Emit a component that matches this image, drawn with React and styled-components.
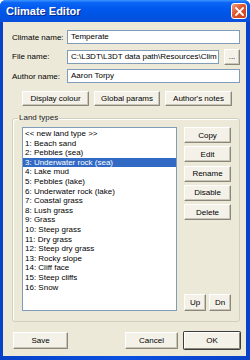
import React from 'react';
import styled, { createGlobalStyle } from 'styled-components';

const GlobalStyle = createGlobalStyle`
  html, body {
    margin: 0;
    padding: 0;
    background: #ffffff;
  }
`;

const font = `"Liberation Sans", Arial, sans-serif`;

const Window = styled.div`
  width: 250px;
  height: 360px;
  box-sizing: border-box;
  display: flex;
  flex-direction: column;
  background: linear-gradient(90deg, #0842c8 0%, #0a4fe0 50%, #0842c8 100%);
  border-radius: 6px 6px 0 0;
  overflow: hidden;
  font-family: ${font};
`;

const TitleBar = styled.div`
  height: 22px;
  flex: none;
  display: flex;
  align-items: center;
  justify-content: space-between;
  padding: 0 3px 0 6px;
  background: linear-gradient(180deg, #3d95ff 0%, #0a66f5 12%, #0058ee 40%, #0054e3 70%, #0a4fdc 100%);
  box-sizing: border-box;
`;

const Title = styled.span`
  color: #ffffff;
  font-weight: bold;
  font-size: 11px;
  text-shadow: 1px 1px 0 #0a2a8a;
`;

const CloseButton = styled.div`
  width: 16px;
  height: 16px;
  box-sizing: border-box;
  border: 1px solid #ffffff;
  border-radius: 3px;
  background: linear-gradient(135deg, #f0a080 0%, #e0552f 45%, #c8401a 100%);
  display: flex;
  align-items: center;
  justify-content: center;
`;

const Client = styled.div`
  flex: 1;
  min-width: 0;
  margin: 0 4px 4px 3px;
  background: #ece9d8;
  display: flex;
  flex-direction: column;
  padding: 8px 6px 0 9px;
  box-sizing: border-box;
`;

const FormGrid = styled.div`
  display: grid;
  grid-template-columns: 55px minmax(0, 1fr);
  row-gap: 4.5px;
  align-items: center;
`;

const Label = styled.label`
  font-size: 8px;
  color: #000;
  white-space: nowrap;
`;

const FieldRow = styled.div`
  display: flex;
  gap: 5px;
  align-items: center;
  min-width: 0;
`;

const TextBox = styled.div`
  flex: 1;
  min-width: 0;
  height: 14px;
  box-sizing: border-box;
  border: 1px solid #7f9db9;
  background: #fff;
  font-size: 8px;
  line-height: 12px;
  padding: 0 3px;
  color: #000;
  white-space: nowrap;
  overflow: hidden;
`;

const Button = styled.div`
  box-sizing: border-box;
  flex: none;
  width: ${p => p.w}px;
  height: ${p => p.h || 16}px;
  display: flex;
  align-items: center;
  justify-content: center;
  font-size: 8px;
  color: #000;
  white-space: nowrap;
  background: #f4f2e8;
  border: 1px solid;
  border-color: #ffffff #8a877a #8a877a #ffffff;
  box-shadow: ${p => (p.primary ? '0 0 0 1px #3c3c3c' : 'inset -1px -1px 0 #c9c6b8')};
  border-radius: 1px;
`;

const ButtonRow = styled.div`
  display: flex;
  gap: ${p => p.gap || 5}px;
  margin: ${p => p.m || '0'};
`;

const Group = styled.fieldset`
  margin: 7px 0 0 0;
  padding: 4px 8px 10px 9px;
  border: 1px solid #d0d0bf;
  border-radius: 3px;
  box-shadow: inset 1px 1px 0 #ffffff;
  display: flex;
  gap: 7px;
  min-width: 0;
`;

const Legend = styled.legend`
  font-size: 8px;
  color: #1a1a1a;
  padding: 0 1px;
  margin-left: -4px;
  line-height: 10px;
`;

const ListBox = styled.div`
  width: 155px;
  height: 184px;
  box-sizing: border-box;
  border: 1px solid #7f9db9;
  background: #fff;
  padding-top: 1px;
  flex: none;
`;

const Item = styled.div`
  height: 9.6px;
  line-height: 9.6px;
  font-size: 8px;
  padding-left: 2px;
  white-space: nowrap;
  color: ${p => (p.selected ? '#fff' : '#000')};
  background: ${p => (p.selected ? '#316ac5' : 'transparent')};
`;

const SideColumn = styled.div`
  display: flex;
  flex-direction: column;
  justify-content: space-between;
  flex: 1;
`;

const SideButtons = styled.div`
  display: flex;
  flex-direction: column;
  gap: 3.3px;
`;

const Footer = styled.div`
  display: flex;
  margin: 10px 0 0 1px;
  width: 227px;
`;

const Spacer = styled.div`
  flex: 1;
`;

const items = [
  '<< new land type >>',
  '1: Beach sand',
  '2: Pebbles (sea)',
  '3: Underwater rock (sea)',
  '4: Lake mud',
  '5: Pebbles (lake)',
  '6: Underwater rock (lake)',
  '7: Coastal grass',
  '8: Lush grass',
  '9: Grass',
  '10: Steep grass',
  '11: Dry grass',
  '12: Steep dry grass',
  '13: Rocky slope',
  '14: Cliff face',
  '15: Steep cliffs',
  '16: Snow',
];

export default function App() {
  return (
    <>
      <GlobalStyle />
      <Window>
        <TitleBar>
          <Title>Climate Editor</Title>
          <CloseButton>
            <svg width="9" height="9" viewBox="0 0 9 9">
              <path d="M1 1 L8 8 M8 1 L1 8" stroke="#fff" strokeWidth="1.8" strokeLinecap="square" />
            </svg>
          </CloseButton>
        </TitleBar>
        <Client>
          <FormGrid>
            <Label>Climate name:</Label>
            <FieldRow>
              <TextBox>Temperate</TextBox>
            </FieldRow>
            <Label>File name:</Label>
            <FieldRow>
              <TextBox>C:\L3DT\L3DT data path\Resources\Clim</TextBox>
              <Button w={16} h={16}>...</Button>
            </FieldRow>
            <Label>Author name:</Label>
            <FieldRow>
              <TextBox>Aaron Torpy</TextBox>
            </FieldRow>
          </FormGrid>

          <ButtonRow gap={5} m="8px 0 0 10px">
            <Button w={67} h={15}>Display colour</Button>
            <Button w={66} h={15}>Global params</Button>
            <Button w={67} h={15}>Author's notes</Button>
          </ButtonRow>

          <Group>
            <Legend>Land types</Legend>
            <ListBox>
              {items.map((t, i) => (
                <Item key={t} selected={i === 3}>{t}</Item>
              ))}
            </ListBox>
            <SideColumn>
              <SideButtons>
                <Button w={47}>Copy</Button>
                <Button w={47}>Edit</Button>
                <Button w={47}>Rename</Button>
                <Button w={47}>Disable</Button>
                <Button w={47}>Delete</Button>
              </SideButtons>
              <ButtonRow gap={3}>
                <Button w={22} h={17}>Up</Button>
                <Button w={22} h={17}>Dn</Button>
              </ButtonRow>
            </SideColumn>
          </Group>

          <Footer>
            <Button w={55} h={17}>Save</Button>
            <Spacer />
            <Button w={53} h={17}>Cancel</Button>
            <Button w={56} h={17} primary style={{ marginLeft: 6 }}>OK</Button>
          </Footer>
        </Client>
      </Window>
    </>
  );
}
